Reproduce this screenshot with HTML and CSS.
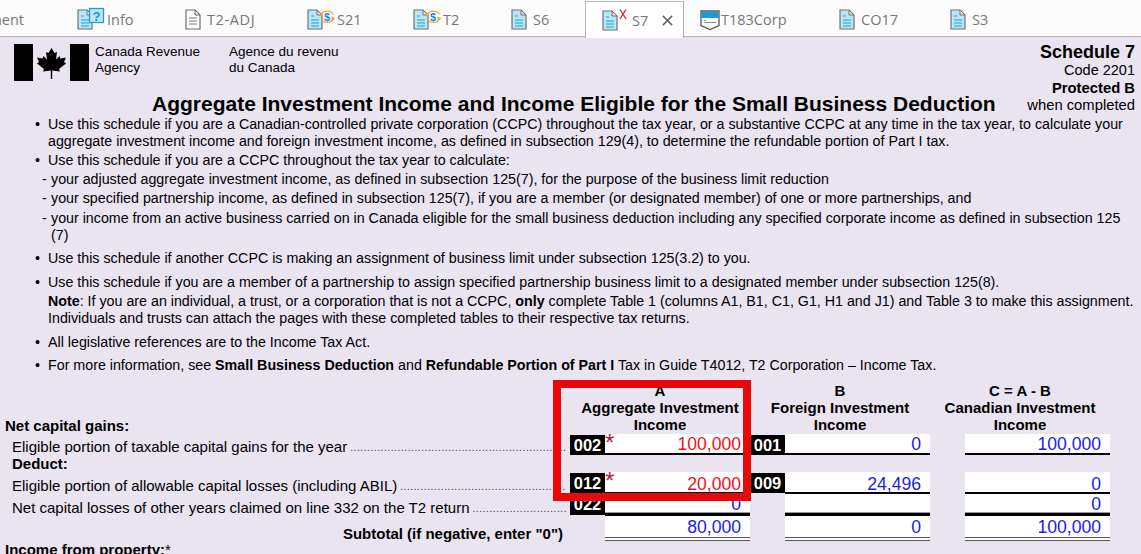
FILE: index.html
```html
<!DOCTYPE html>
<html lang="en">
<head>
<meta charset="utf-8">
<title>Schedule 7</title>
<link rel="stylesheet" href="styles.css">
</head>
<body>
<svg class="defs" width="0" height="0" aria-hidden="true">
  <symbol id="doc" viewBox="0 0 16 21">
    <path d="M1 1H10L15 6V20H1Z" fill="#b9e6f7" stroke="#6b7378" stroke-width="1.2"/>
    <path d="M10 1V6H15Z" fill="#e4e4e4" stroke="#6b7378" stroke-width="1"/>
    <path d="M4 7H7M4 11H12M4 14H12M4 17H12" stroke="#1ba1d8" stroke-width="1.2" fill="none"/>
  </symbol>
  <symbol id="docw" viewBox="0 0 16 21">
    <path d="M1 1H10L15 6V20H1Z" fill="#fff" stroke="#6b6b6b" stroke-width="1.2"/>
    <path d="M10 1V6H15Z" fill="#e8e8e8" stroke="#6b6b6b" stroke-width="1"/>
    <path d="M4 9H12M4 12H12M4 15H12" stroke="#777" stroke-width="1.2" fill="none"/>
  </symbol>
  <symbol id="money" viewBox="0 0 30 21">
    <use href="#doc" x="0" y="0" width="16" height="21"/>
    <path d="M14 5.500A7.500 7.500 0 0 1 26.500 5.500M26.500 10A7.500 7.500 0 0 1 14 10" fill="none" stroke="#f0a040" stroke-width="1.2"/>
    <path d="M11.500 6L15.500 3.500V8Z M28.500 9.500L24.500 7.500V12Z" fill="#f0a040"/>
    <text x="20" y="11.500" class="dollar">$</text>
  </symbol>
</svg>

<nav class="tabs">
  <div class="tab tab-a"><span class="clip">nent</span></div>
  <div class="tab tab-b">
    <svg class="ic-wide" viewBox="0 0 30 21"><use href="#doc" width="16" height="21"/><rect x="12.500" y="-0.500" width="14" height="14" fill="#b9e6f7" stroke="#22a0d6" stroke-width="1.300"/><text x="19.500" y="11.500" class="help">?</text></svg><span>Info</span>
  </div>
  <div class="tab tab-c"><svg class="ic"><use href="#docw"/></svg><span class="lbl">T2-ADJ</span></div>
  <div class="tab tab-d"><svg class="ic-wide"><use href="#money"/></svg><span>S21</span></div>
  <div class="tab tab-e"><svg class="ic-wide"><use href="#money"/></svg><span>T2</span></div>
  <div class="tab tab-f"><svg class="ic"><use href="#doc"/></svg><span class="lbl">S6</span></div>
  <div class="tab tab-active">
    <svg class="ic-wide" viewBox="0 0 30 21"><use href="#doc" width="16" height="21"/><path d="M18 -0.500L24 9M24 -0.500L18 9" stroke="#e8203c" stroke-width="1.400" fill="none"/></svg><span>S7</span>
    <svg class="close" viewBox="0 0 12 12"><path d="M1 1L11 11M11 1L1 11" stroke="#666" stroke-width="1.700"/></svg>
  </div>
  <div class="tab tab-h">
    <svg class="shield" viewBox="0 0 20 20"><path d="M1 1H19V15.500L10 19.500L1 15.500Z" fill="#fdfdfd" stroke="#555" stroke-width="1.300"/><rect x="1.500" y="1.500" width="17" height="6.500" fill="#1d9bd1"/><path d="M4 12.500H16" stroke="#888" stroke-width="1"/><path d="M4 10.500H6" stroke="#5bb55b" stroke-width="1"/></svg><span>T183Corp</span>
  </div>
  <div class="tab tab-i"><svg class="ic"><use href="#doc"/></svg><span class="lbl">CO17</span></div>
  <div class="tab tab-j"><svg class="ic"><use href="#doc"/></svg><span class="lbl">S3</span></div>
</nav>

<main class="form">
  <header class="head">
    <div class="head-left">
      <div class="brand">
        <svg class="flag" viewBox="0 0 75 37">
          <rect width="19" height="37" fill="#000"/><rect x="56" width="19" height="37" fill="#000"/>
          <path d="M37.500 4L40.500 9L43 8L42 15.500L45.500 12L46.500 14.500L52 13.500L50 18L52 19.500L45 25L46 27.500L38.200 26.500V35H36.800V26.500L29 27.500L30 25L23 19.500L25 18L23 13.500L28.500 14.500L29.500 12L33 15.500L32 8L34.500 9Z" fill="#000"/>
        </svg>
        <div class="brand-en">Canada Revenue<br>Agency</div>
        <div class="brand-fr">Agence du revenu<br>du Canada</div>
      </div>
      <h1 class="title">Aggregate Investment Income and Income Eligible for the Small Business Deduction</h1>
    </div>
    <div class="head-right">
      <div class="sched">Schedule 7</div>
      <div class="code">Code 2201</div>
      <div class="prot">Protected B</div>
      <div class="when">when completed</div>
    </div>
  </header>

  <section class="notes">
    <p class="bullet">Use this schedule if you are a Canadian-controlled private corporation (CCPC) throughout the tax year, or a substantive CCPC at any time in the tax year, to calculate your aggregate investment income and foreign investment income, as defined in subsection 129(4), to determine the refundable portion of Part I tax.</p>
    <p class="bullet g2">Use this schedule if you are a CCPC throughout the tax year to calculate:</p>
    <p class="dash g2">your adjusted aggregate investment income, as defined in subsection 125(7), for the purpose of the business limit reduction</p>
    <p class="dash g2">your specified partnership income, as defined in subsection 125(7), if you are a member (or designated member) of one or more partnerships, and</p>
    <p class="dash g3">your income from an active business carried on in Canada eligible for the small business deduction including any specified corporate income as defined in subsection 125 (7)</p>
    <p class="bullet g6">Use this schedule if another CCPC is making an assignment of business limit under subsection 125(3.2) to you.</p>
    <p class="bullet g7">Use this schedule if you are a member of a partnership to assign specified partnership business limit to a designated member under subsection 125(8).</p>
    <p class="g2"><b>Note</b>: If you are an individual, a trust, or a corporation that is not a CCPC, <b>only</b> complete Table 1 (columns A1, B1, C1, G1, H1 and J1) and Table 3 to make this assignment. Individuals and trusts can attach the pages with these completed tables to their respective tax returns.</p>
    <p class="bullet g7">All legislative references are to the Income Tax Act.</p>
    <p class="bullet g6">For more information, see <b>Small Business Deduction</b> and <b>Refundable Portion of Part I</b> Tax in Guide T4012, T2 Corporation – Income Tax.</p>
  </section>

  <section class="table">
    <div class="h-label">Net capital gains:</div>
    <div class="col-h">A<br>Aggregate Investment<br>Income</div>
    <div class="col-h">B<br>Foreign Investment<br>Income</div>
    <div class="col-h">C = A - B<br>Canadian Investment<br>Income</div>

    <div class="label l1"><span class="txt">Eligible portion of taxable capital gains for the year</span><span class="dots">........................................................................................</span></div>
    <div class="cell r1"><span class="cd">002</span><span class="val over">100,000</span><span class="star">*</span></div>
    <div class="cell r1"><span class="cd">001</span><span class="val">0</span></div>
    <div class="cell r1"><span class="cd none"></span><span class="val">100,000</span></div>

    <div class="label deduct"><b>Deduct:</b></div>
    <div class="blank"></div><div class="blank"></div><div class="blank"></div>

    <div class="label l2"><span class="txt">Eligible portion of allowable capital losses (including ABIL)</span><span class="dots">........................................................................................</span></div>
    <div class="cell r2"><span class="cd">012</span><span class="val over">20,000</span><span class="star">*</span></div>
    <div class="cell r2"><span class="cd">009</span><span class="val">24,496</span></div>
    <div class="cell r2"><span class="cd none"></span><span class="val">0</span></div>

    <div class="label l2"><span class="txt">Net capital losses of other years claimed on line 332 on the T2 return</span><span class="dots">........................................................................................</span></div>
    <div class="cell r3"><span class="cd">022</span><span class="val">0</span></div>
    <div class="cell r3"><span class="cd none"></span><span class="val"></span></div>
    <div class="cell r3"><span class="cd none"></span><span class="val">0</span></div>

    <div class="label sub"><b>Subtotal (if negative, enter "0")</b></div>
    <div class="cell r4"><span class="cd none"></span><span class="val">80,000</span></div>
    <div class="cell r4"><span class="cd none"></span><span class="val">0</span></div>
    <div class="cell r4"><span class="cd none"></span><span class="val">100,000</span></div>

    <div class="label prop"><b>Income from property:</b>*</div>
  </section>
  <div class="redbox"></div>
</main>
</body>
</html>
```
FILE: styles.css
```css
html, body { margin: 0; padding: 0; height: 554px; overflow: hidden; }
body { font-family: "Liberation Sans", Arial, sans-serif; font-size: 14.250px; color: #000; background: #e9e4f0; position: relative; }
.defs { position: absolute; }
.dollar { font: bold 11px "Liberation Sans", sans-serif; fill: #1d8fd0; text-anchor: middle; }
.help { font: bold 13px "Liberation Sans", sans-serif; fill: #1d93cc; text-anchor: middle; }
svg { overflow: visible; }

.tabs { display: grid; grid-template-columns: 61px 108px 122px 106px 98px 90px 99px 139px 111px 207px; height: 36px; background: #fcfcfc; border-bottom: 1px solid #b4b4b4; margin-bottom: 1px; font-family: "Open Sans", sans-serif; font-size: 14.500px; color: #777; }
.tab { display: flex; align-items: center; padding: 3px 0 0 16px; box-sizing: border-box; height: 36px; }
.tab-a { padding-left: 0; justify-content: flex-end; }
.clip { margin-right: 37px; }
.tab-active { background: #fff; border: 1px solid #b4b4b4; border-bottom: 0; height: 37px; margin-top: 1px; padding-left: 16px; padding-top: 1px; }
.ic { width: 16px; height: 21px; margin-right: 6px; flex: none; }
.tab-c .lbl { letter-spacing: 0.6px; }
.ic-wide { width: 30px; height: 21px; flex: none; }
.close { width: 11px; height: 11px; margin-left: 14px; }
.shield { width: 20px; height: 20px; flex: none; margin-right: 1px; }

.form { display: block; position: relative; }
.head { display: flex; justify-content: space-between; height: 78px; }
.head-left { padding: 6px 0 0 14px; }
.brand { display: flex; line-height: 16px; font-size: 13.500px; }
.flag { width: 75px; height: 37px; flex: none; }
.brand-en { margin-left: 6px; width: 134px; }
.title { margin: 11px 0 0 138px; font-size: 21px; line-height: 24px; font-weight: bold; white-space: nowrap; }
.head-right { text-align: right; padding: 5px 6px 0 0; }
.sched { font-size: 18px; font-weight: bold; line-height: 19px; }
.code { line-height: 17px; font-size: 14.500px; }
.prot { line-height: 18px; font-size: 14.800px; font-weight: bold; }
.when { line-height: 16px; font-size: 14.800px; }

.notes { padding: 0 6px 0 48px; }
.notes p { margin: 0; line-height: 17px; position: relative; }
.bullet::before { content: "•"; position: absolute; left: -13px; }
.dash { padding-left: 3px; }
.dash::before { content: "-"; position: absolute; left: -6px; }
.notes .g2 { margin-top: 2px; }
.notes .g3 { margin-top: 3px; }
.notes .g6 { margin-top: 6px; }
.notes .g7 { margin-top: 7px; }

.table { display: grid; grid-template-columns: 570px 180px 180px 180px; grid-template-rows: 52px 21px 17px 22px 22px 25px 20px; margin-top: 8px; font-size: 15px; }
.col-h { font-weight: bold; text-align: center; line-height: 17px; }
.h-label { font-weight: bold; align-self: end; padding-left: 5px; line-height: 16px; }
.label { display: flex; padding-left: 12px; line-height: 17px; align-items: flex-start; white-space: nowrap; }
.txt { flex: none; }
.dots { flex: 1; min-width: 0; overflow: hidden; margin: 1px 4px 0 3px; font-size: 10px; letter-spacing: 0.6px; color: #333; }
.l1 { padding-top: 4px; }
.l2 { padding-top: 5px; }
.deduct { padding-top: 0; }
.sub { justify-content: flex-end; padding: 9px 7px 0 0; }
.prop { grid-column: 1 / -1; padding-left: 5px; }
.cell { display: flex; position: relative; }
.cd { width: 35px; flex: none; background: #000; color: #fff; font-weight: bold; font-size: 16.500px; text-align: center; line-height: 20px; height: 20px; margin-top: 1px; }
.cd.none { background: none; }
.val { flex: none; width: 145px; box-sizing: border-box; background: #fff; color: #1c1cf0; font-size: 17.600px; text-align: right; padding-right: 9px; line-height: 20px; }
.val.over { color: #f01020; }
.r1 .val { border-bottom: 2px solid #000; }
.r2 .val { border-bottom: 2px solid #000; padding-top: 2px; }
.r3 .val { border-bottom: 3px solid #000; box-shadow: inset 0 -1px 0 #999; }
.r3 .cd { height: 21px; margin-top: 0; }
.r4 .val { border-bottom: 4px double #555; padding-top: 1px; }
.star { position: absolute; left: 35px; top: -3px; color: #a8233c; font-size: 24px; line-height: 24px; }
.redbox { position: absolute; left: 553px; top: 342px; width: 198px; height: 121px; box-sizing: border-box; border: 8px solid #e80808; }
```
